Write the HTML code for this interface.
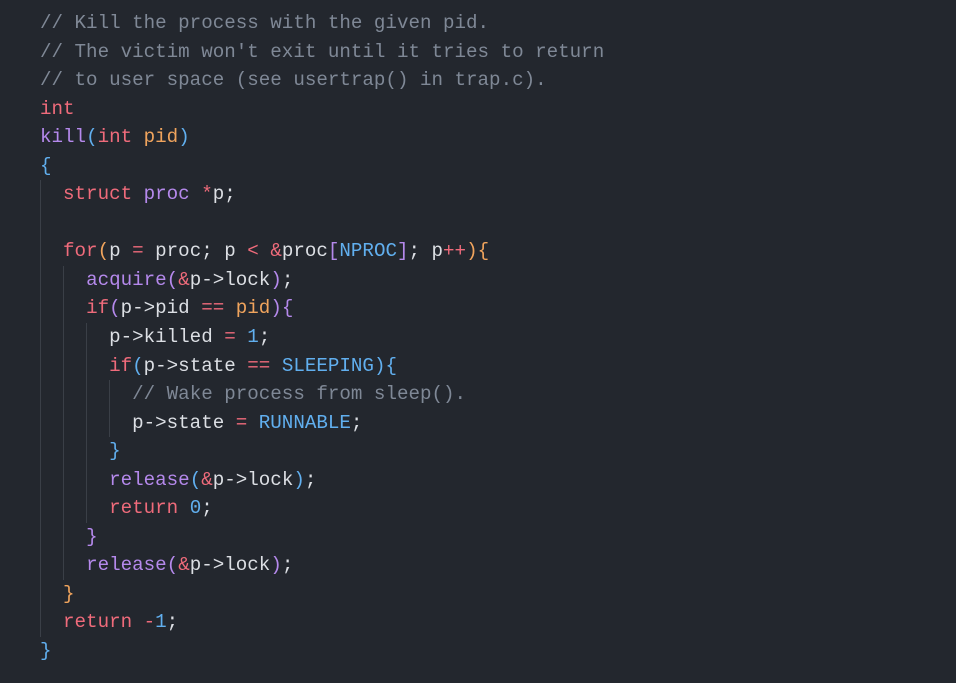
<!DOCTYPE html><html><head><style>
body{margin:0;background:#23272e;width:956px;height:683px;overflow:hidden;position:relative}
pre{position:absolute;left:40px;top:9px;margin:0;font-family:"Liberation Mono",monospace;font-size:19.2px;line-height:28.55px;color:#dcdfe4}
.c{color:#7f8896}.k{color:#ef6b7b}.f{color:#b589ec}.o{color:#ef6b7b}.p{color:#f0a45d}.b{color:#61afef}.n{color:#61afef}
.g{position:absolute;width:1px;background:#3a3f47}
</style></head><body>
<div class="g" style="left:40px;top:180px;height:457px"></div>
<div class="g" style="left:63px;top:266px;height:314px"></div>
<div class="g" style="left:86px;top:323px;height:200px"></div>
<div class="g" style="left:109px;top:380px;height:57px"></div>
<pre><span class="c">// Kill the process with the given pid.</span>
<span class="c">// The victim won't exit until it tries to return</span>
<span class="c">// to user space (see usertrap() in trap.c).</span>
<span class="k">int</span>
<span class="f">kill</span><span class="b">(</span><span class="k">int</span> <span class="p">pid</span><span class="b">)</span>
<span class="b">{</span>
  <span class="k">struct</span> <span class="f">proc</span> <span class="o">*</span>p;

  <span class="k">for</span><span class="p">(</span>p <span class="o">=</span> proc; p <span class="o">&lt;</span> <span class="o">&amp;</span>proc<span class="f">[</span><span class="n">NPROC</span><span class="f">]</span>; p<span class="o">++</span><span class="p">){</span>
    <span class="f">acquire(</span><span class="o">&amp;</span>p-&gt;lock<span class="f">)</span>;
    <span class="k">if</span><span class="f">(</span>p-&gt;pid <span class="o">==</span> <span class="p">pid</span><span class="f">){</span>
      p-&gt;killed <span class="o">=</span> <span class="n">1</span>;
      <span class="k">if</span><span class="b">(</span>p-&gt;state <span class="o">==</span> <span class="n">SLEEPING</span><span class="b">){</span>
        <span class="c">// Wake process from sleep().</span>
        p-&gt;state <span class="o">=</span> <span class="n">RUNNABLE</span>;
      <span class="b">}</span>
      <span class="f">release</span><span class="b">(</span><span class="o">&amp;</span>p-&gt;lock<span class="b">)</span>;
      <span class="k">return</span> <span class="n">0</span>;
    <span class="f">}</span>
    <span class="f">release(</span><span class="o">&amp;</span>p-&gt;lock<span class="f">)</span>;
  <span class="p">}</span>
  <span class="k">return</span> <span class="o">-</span><span class="n">1</span>;
<span class="b">}</span></pre>
</body></html>
